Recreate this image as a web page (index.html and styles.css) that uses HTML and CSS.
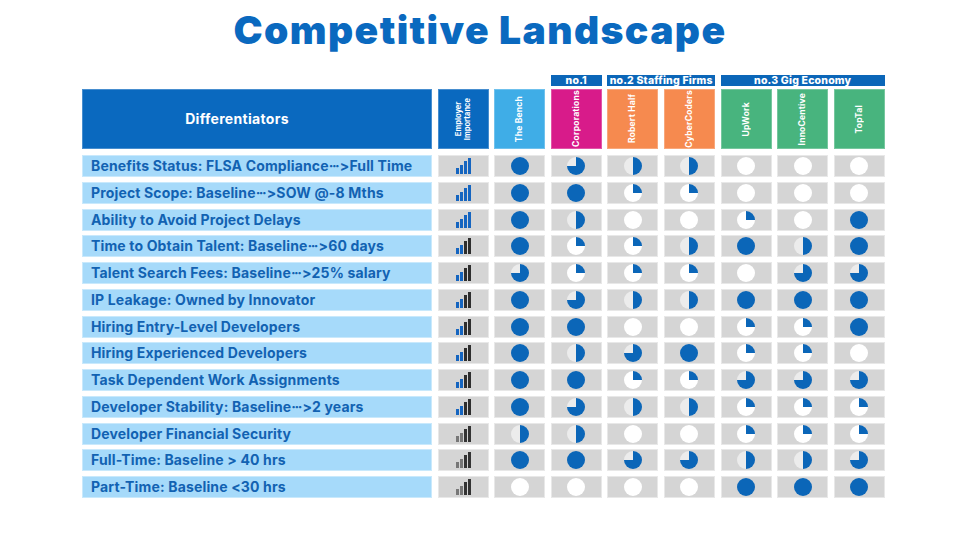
FILE: index.html
```html
<!DOCTYPE html>
<html lang="en">
<head>
<meta charset="utf-8">
<title>Competitive Landscape</title>
<link rel="stylesheet" href="styles.css">
</head>
<body>
<div class="page">
  <h1 class="title">Competitive Landscape</h1>
  <div class="table">
    <div class="groups">
      <div class="group g-no1">no.1</div>
      <div class="group g-no2">no.2 Staffing Firms</div>
      <div class="group g-no3">no.3 Gig Economy</div>
    </div>
    <div class="head">
      <div class="hcell h-main">Differentiators</div>
      <div class="hcell h-dark"><span class="vt two">Employer<br>Importance</span></div>
      <div class="hcell h-light"><span class="vt">The Bench</span></div>
      <div class="hcell h-pink"><span class="vt">Corporations</span></div>
      <div class="hcell h-orange"><span class="vt">Robert Half</span></div>
      <div class="hcell h-orange"><span class="vt">CyberCoders</span></div>
      <div class="hcell h-green"><span class="vt">UpWork</span></div>
      <div class="hcell h-green"><span class="vt">InnoCentive</span></div>
      <div class="hcell h-green"><span class="vt">TopTal</span></div>
    </div>
    <div class="rows">
      <div class="label">Benefits Status: FLSA Compliance<span class="dots">···</span>&gt;Full Time</div>
      <div class="cell"><span class="bars blue4"><i></i><i></i><i></i><i></i></span></div>
      <div class="cell"><span class="pie p4"></span></div>
      <div class="cell"><span class="pie p3"></span></div>
      <div class="cell"><span class="pie p2"></span></div>
      <div class="cell"><span class="pie p2"></span></div>
      <div class="cell"><span class="pie p0"></span></div>
      <div class="cell"><span class="pie p0"></span></div>
      <div class="cell"><span class="pie p0"></span></div>

      <div class="label">Project Scope: Baseline<span class="dots">···</span>&gt;SOW @-8 Mths</div>
      <div class="cell"><span class="bars blue4"><i></i><i></i><i></i><i></i></span></div>
      <div class="cell"><span class="pie p4"></span></div>
      <div class="cell"><span class="pie p4"></span></div>
      <div class="cell"><span class="pie p1"></span></div>
      <div class="cell"><span class="pie p1"></span></div>
      <div class="cell"><span class="pie p0"></span></div>
      <div class="cell"><span class="pie p0"></span></div>
      <div class="cell"><span class="pie p0"></span></div>

      <div class="label">Ability to Avoid Project Delays</div>
      <div class="cell"><span class="bars blue4"><i></i><i></i><i></i><i></i></span></div>
      <div class="cell"><span class="pie p4"></span></div>
      <div class="cell"><span class="pie p2"></span></div>
      <div class="cell"><span class="pie p0"></span></div>
      <div class="cell"><span class="pie p0"></span></div>
      <div class="cell"><span class="pie p1"></span></div>
      <div class="cell"><span class="pie p0"></span></div>
      <div class="cell"><span class="pie p4"></span></div>

      <div class="label">Time to Obtain Talent: Baseline<span class="dots">···</span>&gt;60 days</div>
      <div class="cell"><span class="bars blue2"><i></i><i></i><i></i><i></i></span></div>
      <div class="cell"><span class="pie p4"></span></div>
      <div class="cell"><span class="pie p1"></span></div>
      <div class="cell"><span class="pie p1"></span></div>
      <div class="cell"><span class="pie p2"></span></div>
      <div class="cell"><span class="pie p4"></span></div>
      <div class="cell"><span class="pie p2"></span></div>
      <div class="cell"><span class="pie p4"></span></div>

      <div class="label">Talent Search Fees: Baseline<span class="dots">···</span>&gt;25% salary</div>
      <div class="cell"><span class="bars blue2"><i></i><i></i><i></i><i></i></span></div>
      <div class="cell"><span class="pie p3"></span></div>
      <div class="cell"><span class="pie p1"></span></div>
      <div class="cell"><span class="pie p1"></span></div>
      <div class="cell"><span class="pie p1"></span></div>
      <div class="cell"><span class="pie p0"></span></div>
      <div class="cell"><span class="pie p3"></span></div>
      <div class="cell"><span class="pie p3"></span></div>

      <div class="label">IP Leakage: Owned by Innovator</div>
      <div class="cell"><span class="bars blue2"><i></i><i></i><i></i><i></i></span></div>
      <div class="cell"><span class="pie p4"></span></div>
      <div class="cell"><span class="pie p3"></span></div>
      <div class="cell"><span class="pie p2"></span></div>
      <div class="cell"><span class="pie p2"></span></div>
      <div class="cell"><span class="pie p4"></span></div>
      <div class="cell"><span class="pie p4"></span></div>
      <div class="cell"><span class="pie p4"></span></div>

      <div class="label">Hiring Entry-Level Developers</div>
      <div class="cell"><span class="bars blue2"><i></i><i></i><i></i><i></i></span></div>
      <div class="cell"><span class="pie p4"></span></div>
      <div class="cell"><span class="pie p4"></span></div>
      <div class="cell"><span class="pie p0"></span></div>
      <div class="cell"><span class="pie p0"></span></div>
      <div class="cell"><span class="pie p1"></span></div>
      <div class="cell"><span class="pie p1"></span></div>
      <div class="cell"><span class="pie p4"></span></div>

      <div class="label">Hiring Experienced Developers</div>
      <div class="cell"><span class="bars blue2"><i></i><i></i><i></i><i></i></span></div>
      <div class="cell"><span class="pie p4"></span></div>
      <div class="cell"><span class="pie p2"></span></div>
      <div class="cell"><span class="pie p3"></span></div>
      <div class="cell"><span class="pie p4"></span></div>
      <div class="cell"><span class="pie p1"></span></div>
      <div class="cell"><span class="pie p1"></span></div>
      <div class="cell"><span class="pie p0"></span></div>

      <div class="label">Task Dependent Work Assignments</div>
      <div class="cell"><span class="bars blue2"><i></i><i></i><i></i><i></i></span></div>
      <div class="cell"><span class="pie p4"></span></div>
      <div class="cell"><span class="pie p4"></span></div>
      <div class="cell"><span class="pie p1"></span></div>
      <div class="cell"><span class="pie p1"></span></div>
      <div class="cell"><span class="pie p3"></span></div>
      <div class="cell"><span class="pie p3"></span></div>
      <div class="cell"><span class="pie p3"></span></div>

      <div class="label">Developer Stability: Baseline<span class="dots">···</span>&gt;2 years</div>
      <div class="cell"><span class="bars blue2"><i></i><i></i><i></i><i></i></span></div>
      <div class="cell"><span class="pie p4"></span></div>
      <div class="cell"><span class="pie p3"></span></div>
      <div class="cell"><span class="pie p2"></span></div>
      <div class="cell"><span class="pie p2"></span></div>
      <div class="cell"><span class="pie p1"></span></div>
      <div class="cell"><span class="pie p1"></span></div>
      <div class="cell"><span class="pie p1"></span></div>

      <div class="label">Developer Financial Security</div>
      <div class="cell"><span class="bars gray"><i></i><i></i><i></i><i></i></span></div>
      <div class="cell"><span class="pie p2"></span></div>
      <div class="cell"><span class="pie p2"></span></div>
      <div class="cell"><span class="pie p0"></span></div>
      <div class="cell"><span class="pie p0"></span></div>
      <div class="cell"><span class="pie p1"></span></div>
      <div class="cell"><span class="pie p1"></span></div>
      <div class="cell"><span class="pie p1"></span></div>

      <div class="label">Full-Time: Baseline &gt; 40 hrs</div>
      <div class="cell"><span class="bars gray"><i></i><i></i><i></i><i></i></span></div>
      <div class="cell"><span class="pie p4"></span></div>
      <div class="cell"><span class="pie p4"></span></div>
      <div class="cell"><span class="pie p3"></span></div>
      <div class="cell"><span class="pie p3"></span></div>
      <div class="cell"><span class="pie p2"></span></div>
      <div class="cell"><span class="pie p2"></span></div>
      <div class="cell"><span class="pie p3"></span></div>

      <div class="label">Part-Time: Baseline &lt;30 hrs</div>
      <div class="cell"><span class="bars gray"><i></i><i></i><i></i><i></i></span></div>
      <div class="cell"><span class="pie p0"></span></div>
      <div class="cell"><span class="pie p0"></span></div>
      <div class="cell"><span class="pie p0"></span></div>
      <div class="cell"><span class="pie p0"></span></div>
      <div class="cell"><span class="pie p4"></span></div>
      <div class="cell"><span class="pie p4"></span></div>
      <div class="cell"><span class="pie p4"></span></div>
    </div>
  </div>
</div>
</body>
</html>
```

FILE: styles.css
```css
html, body {
  margin: 0;
  padding: 0;
  background: #ffffff;
}

body {
  width: 960px;
  height: 540px;
  overflow: hidden;
  font-family: Inter, "Noto Sans", "DejaVu Sans", sans-serif;
}

.page {
  width: 960px;
  height: 540px;
  box-sizing: border-box;
  padding-top: 6px;
}

.title {
  margin: 0;
  text-align: center;
  font-size: 39px;
  line-height: 48px;
  font-weight: 900;
  color: #0a69bf;
  letter-spacing: 1.4px;
}

.table {
  --cols: 350px repeat(8, 51px);
  margin-left: 82px;
  margin-top: 21px;
  width: 802px;
}

.groups,
.head,
.rows {
  display: grid;
  grid-template-columns: var(--cols);
  column-gap: 5.6px;
}

.groups {
  height: 11px;
  margin-bottom: 3px;
}

.group {
  background: #0b66b8;
  color: #ffffff;
  font-size: 10.5px;
  font-weight: 800;
  line-height: 11px;
  text-align: center;
  letter-spacing: 0.2px;
}

.g-no1 { grid-column: 4 / 5; }
.g-no2 { grid-column: 5 / 7; }
.g-no3 { grid-column: 7 / 10; }

.head {
  height: 59px;
  margin-bottom: 7px;
}

.hcell {
  display: flex;
  align-items: center;
  justify-content: center;
  color: #ffffff;
  font-weight: 700;
  box-sizing: border-box;
  border: 1px solid rgba(255, 255, 255, 0.25);
}

.h-main {
  background: #0a69bf;
  font-size: 14px;
  letter-spacing: 0.3px;
  padding-right: 40px;
}

.h-dark { background: #0a69bf; }
.h-light { background: #3fade7; }
.h-pink { background: #d81b8a; }
.h-orange { background: #f68a4f; }
.h-green { background: #48b47e; }

.vt {
  writing-mode: vertical-rl;
  transform: rotate(180deg);
  font-size: 8.5px;
  line-height: 9px;
  letter-spacing: 0.2px;
  white-space: nowrap;
  text-align: center;
}

.vt.two {
  font-size: 7.5px;
  line-height: 8.5px;
  letter-spacing: 0;
}

.rows {
  grid-auto-rows: 22px;
  row-gap: 4.75px;
}

.label {
  background: #a6dafa;
  border: 1px solid #c9e9fc;
  box-sizing: border-box;
  color: #1262b2;
  font-size: 14px;
  font-weight: 700;
  line-height: 20px;
  letter-spacing: 0.15px;
  padding-left: 8px;
  white-space: nowrap;
  overflow: hidden;
}

.dots {
  letter-spacing: -1.5px;
  margin-right: 1.5px;
}

.cell {
  background: #d5d5d5;
  border: 1px solid #e8e8e8;
  box-sizing: border-box;
  display: flex;
  align-items: center;
  justify-content: center;
}

.pie {
  width: 18px;
  height: 18px;
  border-radius: 50%;
  display: block;
}

.p0 { background: #ffffff; }
.p1 { background: conic-gradient(#0b66b8 0 25%, #ffffff 0); }
.p2 { background: conic-gradient(#0b66b8 0 50%, #ececec 0); }
.p3 { background: conic-gradient(#0b66b8 0 75%, #ececec 0); }
.p4 { background: #0b66b8; }

.bars {
  display: flex;
  align-items: flex-end;
  gap: 1px;
  height: 16px;
  margin-left: 1px;
}

.bars i {
  display: block;
  width: 3px;
}

.bars i:nth-child(1) { height: 6px; }
.bars i:nth-child(2) { height: 9px; }
.bars i:nth-child(3) { height: 13px; }
.bars i:nth-child(4) { height: 16px; }

.blue4 i { background: #1565c0; }
.blue2 i:nth-child(1),
.blue2 i:nth-child(2) { background: #1565c0; }
.blue2 i:nth-child(3),
.blue2 i:nth-child(4) { background: #2e2e2e; }
.gray i:nth-child(1),
.gray i:nth-child(2) { background: #777777; }
.gray i:nth-child(3),
.gray i:nth-child(4) { background: #333333; }
```
